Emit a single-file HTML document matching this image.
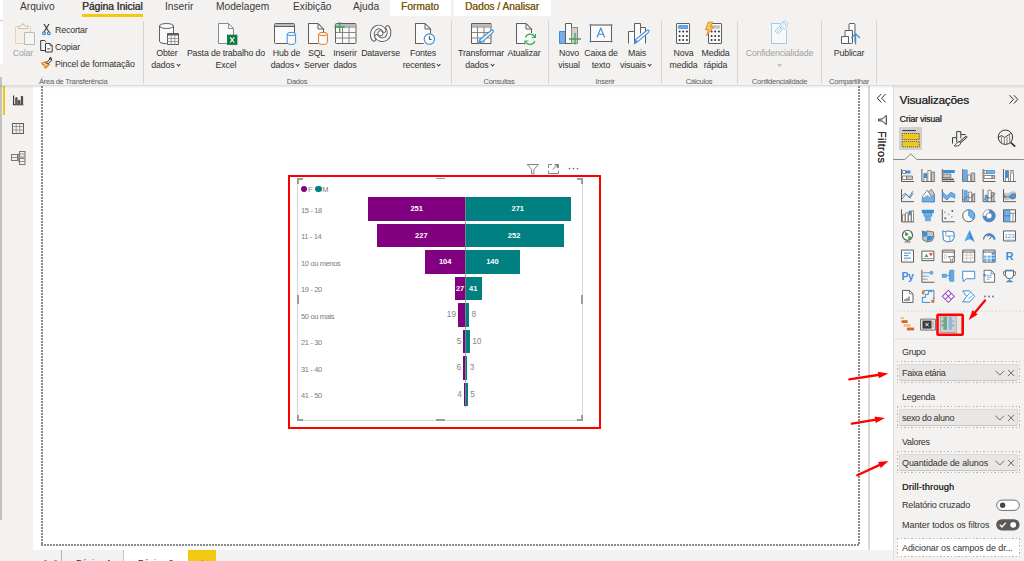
<!DOCTYPE html>
<html><head><meta charset="utf-8">
<style>
*{margin:0;padding:0;box-sizing:border-box}
html,body{width:1024px;height:561px;overflow:hidden;background:#f3f2f1;font-family:"Liberation Sans",sans-serif;color:#252423;position:relative}
.a{position:absolute}
.t{position:absolute;white-space:nowrap;line-height:1}
.tab{font-size:10.2px;top:1.9px;color:#3b3a39}
.rt{font-size:8.8px;letter-spacing:-0.15px;color:#323130;text-align:center;line-height:11.7px}
.st{font-size:8.8px;letter-spacing:-0.15px;color:#323130}
.chev{display:inline-block;font-size:0;width:3.2px;height:3.2px;border-right:1px solid #3b3a39;border-bottom:1px solid #3b3a39;transform:rotate(45deg);margin-left:2px;margin-right:3px;position:relative;top:-1.4px}
.cl{font-size:7.5px;letter-spacing:-0.35px;color:#7c7c7c}
.dl{font-size:7.5px;font-weight:bold;color:#fff;text-align:center}
.ol{font-size:8.3px;color:#858585;margin-top:-0.8px}
.fl{font-size:9px;color:#323130;letter-spacing:-0.3px}
.box{left:896.8px;width:123px;background:repeating-linear-gradient(90deg,#b9b7b5 0 1.5px,transparent 1.5px 3.6px) top left/100% 1px no-repeat,repeating-linear-gradient(90deg,#b9b7b5 0 1.5px,transparent 1.5px 3.6px) bottom left/100% 1px no-repeat,repeating-linear-gradient(180deg,#b9b7b5 0 1.5px,transparent 1.5px 3.6px) top left/1px 100% no-repeat,repeating-linear-gradient(180deg,#b9b7b5 0 1.5px,transparent 1.5px 3.6px) top right/1px 100% no-repeat}
.pill{left:898.6px;width:119.4px;height:16.6px;background:#e9e7e5;border:1px solid #dcdad8;border-bottom-color:#c8c6c4;border-radius:2px}
.gl{font-size:7.6px;letter-spacing:-0.3px;color:#605e5c;top:78.1px}
.sep{position:absolute;width:1px;background:#d6d4d2;top:21px;height:63px}
svg{position:absolute;overflow:visible}
</style></head><body>

<!-- left window strip -->
<div class="a" style="left:0;top:0;width:3px;height:64px;background:#fff"></div>
<div class="a" style="left:0;top:20px;width:3px;height:1px;background:#c8c6c4"></div>
<div class="a" style="left:0;top:77px;width:2px;height:443px;background:#c4c2c0"></div>

<!-- tabs row -->
<div class="a" style="left:390px;top:0;width:61px;height:16px;background:#fff"></div>
<div class="a" style="left:454px;top:0;width:97px;height:16px;background:#fff"></div>
<div class="t tab" style="left:20px">Arquivo</div>
<div class="t tab" style="left:82px;letter-spacing:0px;text-shadow:0.4px 0 0 #3b3a39">Página Inicial</div>
<div class="a" style="left:82px;top:14.2px;width:61px;height:2.5px;background:#f2c811"></div>
<div class="t tab" style="left:165px">Inserir</div>
<div class="t tab" style="left:216px">Modelagem</div>
<div class="t tab" style="left:293px">Exibição</div>
<div class="t tab" style="left:353px">Ajuda</div>
<div class="t tab" style="left:401px;color:#7d5f18;text-shadow:0.2px 0 0 #7d5f18">Formato</div>
<div class="t tab" style="left:465px;color:#7d5f18;text-shadow:0.2px 0 0 #7d5f18">Dados / Analisar</div>


<!-- ribbon text -->
<div class="t rt" style="left:3px;width:40px;top:48px;color:#a19f9d">Colar</div>
<div class="t st" style="left:55px;top:26.2px">Recortar</div>
<div class="t st" style="left:55px;top:42.7px">Copiar</div>
<div class="t st" style="left:55px;top:60.3px">Pincel de formatação</div>
<div class="t gl" style="left:39px">Área de Transferência</div>
<div class="sep" style="left:143px"></div>

<div class="t rt" style="left:127px;width:80px;top:48px">Obter<br>dados<span class="chev"></span></div>
<div class="t rt" style="left:186px;width:80px;top:48px">Pasta de trabalho do<br>Excel</div>
<div class="t rt" style="left:246.5px;width:80px;top:48px">Hub de<br>dados<span class="chev"></span></div>
<div class="t rt" style="left:276.5px;width:80px;top:48px">SQL<br>Server</div>
<div class="t rt" style="left:305px;width:80px;top:48px">Inserir<br>dados</div>
<div class="t rt" style="left:340.5px;width:80px;top:48px">Dataverse</div>
<div class="t rt" style="left:383px;width:80px;top:48px">Fontes<br>recentes<span class="chev"></span></div>
<div class="t gl" style="left:257px;width:80px;text-align:center">Dados</div>
<div class="sep" style="left:451px"></div>

<div class="t rt" style="left:441px;width:80px;top:48px">Transformar<br>dados<span class="chev"></span></div>
<div class="t rt" style="left:484px;width:80px;top:48px">Atualizar</div>
<div class="t gl" style="left:459px;width:80px;text-align:center">Consultas</div>
<div class="sep" style="left:548px"></div>

<div class="t rt" style="left:529px;width:80px;top:48px">Novo<br>visual</div>
<div class="t rt" style="left:561px;width:80px;top:48px">Caixa de<br>texto</div>
<div class="t rt" style="left:597px;width:80px;top:48px">Mais<br>visuais<span class="chev"></span></div>
<div class="t gl" style="left:565px;width:80px;text-align:center">Inserir</div>
<div class="sep" style="left:661px"></div>

<div class="t rt" style="left:643.5px;width:80px;top:48px">Nova<br>medida</div>
<div class="t rt" style="left:675.5px;width:80px;top:48px">Medida<br>rápida</div>
<div class="t gl" style="left:659px;width:80px;text-align:center">Cálculos</div>
<div class="sep" style="left:737px"></div>

<div class="t rt" style="left:739.5px;width:80px;top:48px;color:#a19f9d">Confidencialidade<br><span class="chev" style="margin:0;border-color:#a19f9d"></span></div>
<div class="t gl" style="left:739.5px;width:80px;text-align:center">Confidencialidade</div>
<div class="sep" style="left:821px"></div>

<div class="t rt" style="left:809px;width:80px;top:48px">Publicar</div>
<div class="t gl" style="left:809px;width:80px;text-align:center">Compartilhar</div>
<div class="sep" style="left:876px"></div>


<!-- ribbon icons -->
<svg class="a" style="left:0;top:0" width="1024" height="86" viewBox="0 0 1024 86">
<g fill="none" stroke-linejoin="round">
 <!-- Colar -->
 <rect x="15.5" y="26.5" width="15" height="17" rx="1" fill="#f7efe5" stroke="#f2cfa5"/>
 <path d="M18.5 28.5 v-2.5 h3 l1.5-2.5 l1.5 2.5 h3 v2.5 z" fill="#f8f8f8" stroke="#c4c2c0"/>
 <rect x="24.5" y="32.5" width="10" height="12" fill="#f5f5f5" stroke="#bdbbb9"/>
 <!-- Recortar -->
 <path d="M44 24 L49 32 M49 24 L44 32" stroke="#323130" stroke-width="1.1"/>
 <circle cx="44" cy="33.2" r="1.4" stroke="#3b86c6" stroke-width="1.2"/>
 <circle cx="48.8" cy="33.2" r="1.4" stroke="#3b86c6" stroke-width="1.2"/>
 <!-- Copiar -->
 <path d="M45.5 50.5 h-4.8 v-10 h4 l1.5 1.5" stroke="#3b3a39" stroke-width="1"/>
 <path d="M45.5 43.5 h4.5 l2.2 2.2 v6.3 h-6.7 z" fill="#fafafa" stroke="#3b3a39"/>
 <path d="M50 43.5 v2.2 h2.2" stroke="#3b3a39" stroke-width="0.8"/>
 <rect x="47.3" y="48" width="2.8" height="1.6" fill="#8a8886"/>
 <!-- Pincel -->
 <path d="M40.7 62.8 l5.2-1.8 l4.2 3.6 l-4.5 4.3 z" fill="#e8862a"/>
 <path d="M42.8 63 l4.8 2 M44 65.8 l2.5-0.5" stroke="#fbe3c4" stroke-width="0.9"/>
 <path d="M46.5 62.5 l4-4 l1.6 1.6 l-4 4z" fill="#d0cecc" stroke="#3b3a39" stroke-width="0.9"/>
 <path d="M49.5 59.3 l1.8-1.8" stroke="#3b3a39" stroke-width="2"/>
 <!-- Obter dados -->
 <path d="M159.5 26 v15 c0 1.6 3.2 2.6 7 2.6 M173.5 26 v7" stroke="#605e5c" fill="none"/>
 <path d="M159.5 26 v15 c0 1.6 3.2 2.6 7 2.6 h1 v-10.5 h6 v-7z" fill="#fafafa" stroke="none"/>
 <ellipse cx="166.5" cy="26" rx="7" ry="2.5" fill="#fafafa" stroke="#605e5c"/>
 <path d="M159.5 26 v15 c0 1.6 3.2 2.6 7 2.6 M173.5 26 v7" stroke="#605e5c"/>
 <rect x="167.5" y="33.5" width="11" height="11" fill="#fafafa" stroke="#605e5c"/>
 <rect x="167.5" y="33.5" width="11" height="2" fill="#605e5c"/>
 <path d="M167.5 38.5 h11 M167.5 41.5 h11 M171.2 35.5 v9 M174.8 35.5 v9" stroke="#8a8886" stroke-width="0.8"/>
 <!-- Excel -->
 <path d="M218.5 23.5 h10 l5 5 v15 h-15 z" fill="#fafafa" stroke="#8a8886"/>
 <path d="M228.5 23.5 v5 h5" stroke="#8a8886"/>
 <rect x="227" y="34.7" width="10.4" height="10.2" fill="#107c41"/>
 <path d="M230.2 37.3 l4 5.2 m0-5.2 l-4 5.2" stroke="#fff" stroke-width="1.2"/>
 <!-- Hub de dados -->
 <rect x="274.5" y="23.5" width="20" height="20" rx="1" fill="#fafafa" stroke="#605e5c"/>
 <rect x="275" y="24" width="19" height="2.5" fill="#bebcba"/>
 <path d="M275 26.5 h19" stroke="#605e5c"/>
 <path d="M287.2 34 v8.5 c0 1.2 2 1.9 4.2 1.9 c2.2 0 4.2-0.7 4.2-1.9 v-8.5" fill="#fafafa" stroke="#3b8ed8"/>
 <ellipse cx="291.4" cy="34" rx="4.2" ry="1.6" fill="#fafafa" stroke="#3b8ed8"/>
 <!-- SQL -->
 <path d="M308.5 23.5 h9.5 l5.5 5.5 v3 M318.5 43.5 h-10 v-20" fill="#fafafa" stroke="#605e5c"/>
 <path d="M309 24 h9 l5 5 v14 h-14z" fill="#fafafa" stroke="none"/>
 <path d="M308.5 43.5 v-20 h9.5 l5.5 5.5 v3" stroke="#605e5c"/>
 <path d="M318 23.5 v5.5 h5.5" stroke="#605e5c"/>
 <path d="M318.6 34 v8.5 c0 1.2 2 1.9 4.4 1.9 c2.4 0 4.4-0.7 4.4-1.9 v-8.5" fill="#fafafa" stroke="#e07b2a"/>
 <ellipse cx="323" cy="34" rx="4.4" ry="1.6" fill="#fafafa" stroke="#e07b2a"/>
 <!-- Inserir dados -->
 <rect x="335.5" y="23.5" width="20.5" height="20" rx="1" fill="#fafafa" stroke="#605e5c"/>
 <rect x="336" y="24" width="19.5" height="2.5" fill="#bebcba"/>
 <path d="M336 27 h19.5 M336 32.5 h19.5 M336 38 h19.5 M342.5 27 v16.5 M349 27 v16.5" stroke="#7a7876" stroke-width="0.9"/>
 <path d="M339.7 22 v10.5 M334.2 27 h10.7" stroke="#3aa757" stroke-width="1.3"/>
 <!-- Dataverse -->
 <path d="M384.2 30.5 C382.5 26.8 378.5 26.2 375.8 27.8 C371.8 30.3 371.3 36.5 374 39.3" stroke="#605e5c" stroke-width="4.6" fill="none" stroke-linecap="round"/>
 <path d="M384.2 30.5 C382.5 26.8 378.5 26.2 375.8 27.8 C371.8 30.3 371.3 36.5 374 39.3" stroke="#fafafa" stroke-width="2.7" fill="none" stroke-linecap="round"/>
 <path d="M376.5 36.5 C378.3 39.7 382.8 40.4 385.8 38.8 C389.6 36.6 390 30.5 387.5 27.5" stroke="#605e5c" stroke-width="4.6" fill="none" stroke-linecap="round"/>
 <path d="M376.5 36.5 C378.3 39.7 382.8 40.4 385.8 38.8 C389.6 36.6 390 30.5 387.5 27.5" stroke="#fafafa" stroke-width="2.7" fill="none" stroke-linecap="round"/>
 <circle cx="380.4" cy="33.3" r="2.6" fill="#fafafa" stroke="#605e5c" stroke-width="1"/>
 <!-- Fontes recentes -->
 <path d="M423.5 43.5 h-8 v-20 h9.5 l5.5 5.5 v4.5" fill="#fafafa" stroke="#605e5c"/>
 <path d="M416 24 h9 l5 5 v14 h-14z" fill="#fafafa"/>
 <path d="M423.5 43.5 h-8 v-20 h9.5 l5.5 5.5 v4.5" stroke="#605e5c"/>
 <path d="M425 23.5 v5.5 h5.5" stroke="#605e5c"/>
 <circle cx="429.4" cy="39.1" r="5.2" fill="#fafafa" stroke="#3b8ed8" stroke-width="1.1"/>
 <path d="M429.4 36.2 v3.2 h2.2" stroke="#323130" stroke-width="0.9"/>
 <!-- Transformar -->
 <rect x="471.5" y="23.5" width="19.5" height="20" fill="#fafafa" stroke="#605e5c"/>
 <rect x="472" y="24" width="18.5" height="2.5" fill="#bebcba"/>
 <path d="M472 27 h18.5 M472 32.5 h18.5 M472 38 h18.5 M477.5 27 v16.5 M484 27 v16.5" stroke="#7a7876" stroke-width="0.9"/>
 <path d="M478.5 43.8 l1-3.8 l11.5-9.5 c0.8-0.7 2-0.5 2.2 0.3 c0.3 0.8-0.2 1.6-0.8 2.1 l-11.3 9.7z" fill="#fff" stroke="#3b8ed8" stroke-width="1.1"/>
 <path d="M478.5 43.8 l1-3.8 l2.5 1.2z" fill="#3b8ed8"/>
 <!-- Atualizar -->
 <path d="M524.5 43.5 h-8 v-20 h9.5 l5.5 5.5 v4" fill="#fafafa" stroke="#605e5c"/>
 <path d="M517 24 h9 l5 5 v14 h-14z" fill="#fafafa"/>
 <path d="M524.5 43.5 h-8 v-20 h9.5 l5.5 5.5 v4" stroke="#605e5c"/>
 <path d="M526 23.5 v5.5 h5.5" stroke="#605e5c"/>
 <path d="M525.5 37.5 a5 5 0 0 1 9.3 -0.5 M534.8 41 a5 5 0 0 1 -9.3 0.5" stroke="#3aa757" stroke-width="1.2"/>
 <path d="M535.5 34 v3.5 h-3.5 M524.8 44.5 v-3.5 h3.5" stroke="#3aa757" stroke-width="1.1"/>
 <!-- Novo visual -->
 <rect x="559.5" y="31.5" width="6" height="12" fill="#76aee6" stroke="#3b8ed8"/>
 <rect x="565.5" y="23.5" width="6" height="20" fill="#fafafa" stroke="#605e5c"/>
 <rect x="571.5" y="27.5" width="6" height="16" fill="#d2d0ce" stroke="#8a8886"/>
 <path d="M575 33 v11.5 M569 39 h12" stroke="#3aa757" stroke-width="1.3"/>
 <!-- Caixa de texto -->
 <rect x="590.5" y="25" width="21" height="16.5" fill="#fafafa" stroke="#605e5c"/>
 <path d="M591 25 h20" stroke="#a19f9d" stroke-width="1.2"/>
 <circle cx="590.5" cy="25" r="1.1" fill="#3b8ed8"/><circle cx="611.5" cy="25" r="1.1" fill="#3b8ed8"/>
 <circle cx="590.5" cy="41.5" r="1.1" fill="#3b8ed8"/><circle cx="611.5" cy="41.5" r="1.1" fill="#3b8ed8"/>
 <path d="M597 37.5 l3.8-9.5 l3.8 9.5 M598.3 34.3 h5" stroke="#3b8ed8" stroke-width="1.1"/>
 <!-- Mais visuais -->
 <path d="M628.5 43.5 v-12 h6 v-8 h6 v4 h5 v16" fill="#fafafa" stroke="#605e5c"/>
 <path d="M634.5 31.5 v12 M640.5 27.5 v6" stroke="#605e5c"/>
 <path d="M634.3 43.6 l1-3.8 l11.3-9.3 c0.8-0.7 2-0.5 2.2 0.3 c0.3 0.8-0.2 1.6-0.8 2.1 l-11.1 9.5z" fill="#fff" stroke="#3b8ed8" stroke-width="1.1"/>
 <path d="M634.3 43.6 l1-3.8 l2.5 1.2z" fill="#3b8ed8"/>
 <!-- Nova medida -->
 <rect x="676.5" y="23.5" width="13" height="20" rx="0.5" fill="#fafafa" stroke="#605e5c"/>
 <rect x="678.3" y="25.2" width="9.6" height="3.6" rx="0.4" fill="#2b7cd3"/>
 <rect x="678.8" y="25.8" width="8.6" height="2.2" fill="#6aa8ec"/>
 <g fill="#323130"><circle cx="679.6" cy="31.6" r="1"/><circle cx="683.2" cy="31.6" r="1"/><circle cx="686.9" cy="31.6" r="1"/>
 <circle cx="679.6" cy="35.9" r="1"/><circle cx="683.2" cy="35.9" r="1"/><circle cx="686.9" cy="35.9" r="1"/>
 <circle cx="679.6" cy="40.1" r="1"/><circle cx="683.2" cy="40.1" r="1"/><circle cx="686.9" cy="40.1" r="1"/></g>
 <!-- Medida rapida -->
 <rect x="708.5" y="23.5" width="13" height="20" rx="0.5" fill="#fafafa" stroke="#605e5c"/>
 <rect x="710.3" y="25.2" width="9.6" height="3.6" fill="#c8c6c4"/>
 <g fill="#323130"><circle cx="711.6" cy="31.6" r="1"/><circle cx="715.2" cy="31.6" r="1"/><circle cx="718.9" cy="31.6" r="1"/>
 <circle cx="711.6" cy="35.9" r="1"/><circle cx="715.2" cy="35.9" r="1"/><circle cx="718.9" cy="35.9" r="1"/>
 <circle cx="711.6" cy="40.1" r="1"/><circle cx="715.2" cy="40.1" r="1"/><circle cx="718.9" cy="40.1" r="1"/></g>
 <path d="M708.2 22.2 h4.6 l-2.4 4.6 h3 l-6.8 9 l1.8-6 h-3z" fill="#f7c95c" stroke="#e8862a" stroke-width="0.9"/>
 <!-- Confidencialidade -->
 <path d="M771.5 23.5 h9 M771.5 23.5 v20 h15 v-14" fill="#fafafa" stroke="#9fcbed"/>
 <path d="M772 24 h8 l6 4 v15 h-14z" fill="#f6f8fa"/>
 <path d="M771.5 23.5 h8.5 M771.5 23.5 v20 h15 v-13" stroke="#9fcbed"/>
 <path d="M775 31 l4.5-4.5 l3 3 l-4.5 4.5z M776.5 32.5 l4.5-4.5" stroke="#9fcbed" stroke-width="0.9"/>
 <path d="M780 25 l3-3 l4.5 4.5 l-3 3z M783 22 l2-1.5 l3 3 l-1.5 2" fill="#e8f2fb" stroke="#9fcbed" stroke-width="0.9"/>
 <!-- Publicar -->
 <path d="M841.5 43.5 v-7 h3.5 v-6 h4 v-6 c0-0.6 0.4-1 1-1 h4 c0.6 0 1 0.4 1 1 v18" fill="#fafafa" stroke="#605e5c"/>
 <path d="M845 36.5 h3.5 v7 M849 30.5 h3.5 v13 M841.5 43.5 h10" stroke="#605e5c" fill="none"/>
 <path d="M855.6 44.5 v-10.5 M851.3 38 l4.3-4.3 l4.3 4.3" stroke="#3b8ed8" stroke-width="1.2" fill="none"/>
 <!-- chevrons -->
</g>
</svg>

<!-- ribbon bottom shadow -->


<!-- canvas -->
<div class="a" style="left:33px;top:86px;width:835px;height:464px;background:#fff"></div>
<div class="a" style="left:868px;top:86px;width:2px;height:464px;background:#dad8d6"></div>
<div class="a" style="left:870px;top:86px;width:23px;height:464px;background:#fff"></div>
<div class="a" style="left:893px;top:86px;width:1px;height:475px;background:#e1dfdd"></div>

<!-- left nav -->
<div class="a" style="left:3px;top:86px;width:2px;height:29px;background:#f2c811"></div>

<!-- dotted page boundary -->
<div class="a" style="left:41px;top:86px;width:2px;height:460px;background:repeating-linear-gradient(to bottom,#8c8c8c 0 1.6px,#fff 1.6px 3px)"></div>
<div class="a" style="left:858px;top:86px;width:2px;height:460px;background:repeating-linear-gradient(to bottom,#8c8c8c 0 1.6px,#fff 1.6px 3px)"></div>
<div class="a" style="left:41px;top:544px;width:819px;height:2px;background:repeating-linear-gradient(to right,#8c8c8c 0 1.6px,#fff 1.6px 3px)"></div>


<!-- left nav icons -->
<svg class="a" style="left:0;top:86px" width="33" height="90" viewBox="0 86 33 90">
<g fill="none" stroke="#323130" stroke-width="1">
 <path d="M13.6 95.5 v9.2 h9.8" stroke-width="1.1"/><path d="M15.8 104.3 v-6.5 h1.3 v6.5 M18.6 104.3 v-3.8 h1.3 v3.8 M21.3 104.3 v-7.8 h1.3 v7.8" stroke-width="0.9" fill="#8a8886"/>
 <rect x="12.5" y="123.5" width="11" height="10" stroke="#605e5c"/>
 <path d="M12.5 126.5 h11 M12.5 130 h11 M16.2 123.5 v10 M19.8 123.5 v10" stroke="#8a8886" stroke-width="0.8"/>
 <rect x="11.5" y="154.5" width="6" height="6" stroke="#797775"/>
 <path d="M11.5 157.5 h6" stroke="#797775" stroke-width="0.8"/>
 <rect x="19.5" y="151.5" width="5.5" height="5.5" stroke="#797775"/>
 <path d="M19.5 154 h5.5" stroke="#797775" stroke-width="0.8"/>
 <rect x="19.5" y="158.5" width="5.5" height="6" stroke="#797775"/>
 <path d="M19.5 161.5 h5.5" stroke="#797775" stroke-width="0.8"/>
 <path d="M17.5 157.5 h1 v-3.5 h1 M18.5 157.5 v4 h1" stroke="#797775" stroke-width="0.8"/>
</g>
</svg>

<!-- filters pane -->
<svg class="a" style="left:870px;top:88px" width="23" height="20" viewBox="870 88 23 20"><path d="M881.3 94 l-4 4.2 l4 4.2 M885.6 94 l-4 4.2 l4 4.2" fill="none" stroke="#323130" stroke-width="1"/></svg>
<svg class="a" style="left:870px;top:110px" width="23" height="20" viewBox="870 110 23 20">
<path d="M886.3 115.5 v9 l-4.3-3.6 h-3.5 M886.3 115.5 l-4.3 3.6 h-3.5 v1.8" fill="none" stroke="#323130" stroke-width="1" stroke-linejoin="round"/>
</svg>
<div class="t" style="left:876px;top:130.5px;font-size:11px;color:#323130;writing-mode:vertical-rl;letter-spacing:0.35px;text-shadow:0 0.4px 0 #323130">Filtros</div>

<!-- visualizations pane -->
<div class="t" style="left:899.5px;top:93.8px;font-size:11.6px;color:#323130;letter-spacing:-0.1px;text-shadow:0.25px 0 0 #323130">Visualizações</div>
<svg class="a" style="left:1000px;top:90px" width="24" height="20" viewBox="1000 90 24 20"><path d="M1009.5 95.2 l4 4.2 l-4 4.2 M1013.8 95.2 l4 4.2 l-4 4.2" fill="none" stroke="#323130" stroke-width="1"/></svg>
<div class="t" style="left:899.5px;top:115.3px;font-size:8.9px;color:#3b3a39;letter-spacing:-0.2px;text-shadow:0.3px 0 0 #3b3a39">Criar visual</div>
<div class="a" style="left:899.4px;top:127.3px;width:22.7px;height:22.4px;background:#d2d0ce;border-radius:1px"></div>
<svg class="a" style="left:893px;top:125px" width="131" height="40" viewBox="893 125 131 40">
 <path d="M902.3 130.6 h13.5" stroke="#323130" stroke-width="1"/>
 <rect x="902.2" y="133.5" width="17.2" height="6" fill="#f2c811" stroke="#323130" stroke-width="0.8" stroke-dasharray="1 1"/>
 <rect x="902.2" y="141.4" width="17.2" height="5.5" fill="#f2c811" stroke="#323130" stroke-width="0.8" stroke-dasharray="1 1"/>
 <g fill="none" stroke="#323130" stroke-width="1">
  <path d="M952.5 143.5 V137.7 H956.5 M956.7 142.2 V131.6 H960.8 V138.4 M961 134.6 H965.7" stroke-width="0.95"/>
  <path d="M966.3 136.9 L959.6 142.6" stroke-width="2.3" stroke-linecap="round"/>
  <path d="M966.3 136.9 L959.6 142.6" stroke="#f3f2f1" stroke-width="0.9" stroke-linecap="round"/>
  <path d="M960.2 142 c-1.5-0.6-3 0.2-3.8 1.3 c-0.6 0.9-1 1.9-2.2 2.5 c2 0.6 4.4 0.2 5.6-1 c0.8-0.8 0.9-1.9 0.4-2.8z" fill="#f3f2f1" stroke-width="0.9"/>
  <circle cx="1005.4" cy="137.2" r="7.2"/>
  <path d="M1010.6 142.4 l4.6 4.3" stroke-width="1.7"/>
  <path d="M998.6 137.4 l2.8-1.9 l3 2 l6.3-4" stroke-width="0.9"/>
  <path d="M1001.4 136.5 v7 M1004.3 138.3 v6 M1007 137 v7 M1009.6 135 v6.5" stroke-width="0.8" stroke="#6a6866"/>
 </g>
 <path d="M893 159.5 h11.8 l6-5.6 l6 5.6 h107" fill="none" stroke="#8a8886" stroke-width="1"/>
</svg>

<svg class="a" style="left:893px;top:160px" width="131" height="190" viewBox="893 160 131 190" stroke-linejoin="round" fill="none">
<g transform="translate(901.00 169.00)"><path d="M0.5 0 v12.5 h12.5" stroke="#605e5c"/><rect x="1.5" y="1.5" width="3" height="3" fill="#fff" stroke="#605e5c" stroke-width=".7"/><rect x="4.5" y="1.5" width="5" height="3" fill="#3b8ed8"/><rect x="1.5" y="7" width="4" height="3.5" fill="#fff" stroke="#605e5c" stroke-width=".7"/><rect x="5.5" y="7" width="6" height="3.5" fill="#c8c6c4" stroke="#605e5c" stroke-width=".7"/></g>
<g transform="translate(921.40 169.00)"><path d="M0.5 0 v12.5 h12.5" stroke="#605e5c"/><rect x="2.5" y="4.5" width="3" height="8" fill="#fff" stroke="#605e5c" stroke-width=".7"/><rect x="2.5" y="5" width="3" height="4" fill="#3b8ed8"/><rect x="6.5" y="1.5" width="3" height="11" fill="#fff" stroke="#605e5c" stroke-width=".7"/><rect x="10" y="3" width="3" height="9.5" fill="#c8c6c4" stroke="#605e5c" stroke-width=".7"/></g>
<g transform="translate(941.80 169.00)"><path d="M0.5 0 v12.5 h12.5" stroke="#605e5c"/><rect x="1" y="1" width="12" height="3" fill="#3b8ed8"/><rect x="1" y="5" width="8" height="3.5" fill="#c8c6c4" stroke="#605e5c" stroke-width=".7"/><rect x="1" y="9.5" width="11" height="1.8" fill="#605e5c"/></g>
<g transform="translate(962.20 169.00)"><path d="M0.5 0 v12.5 h12.5" stroke="#605e5c"/><rect x="1.5" y="1" width="3.5" height="11.5" fill="#76aee6" stroke="#3b8ed8" stroke-width=".7"/><rect x="5.5" y="6" width="3" height="6.5" fill="#fff" stroke="#605e5c" stroke-width=".7"/><rect x="9" y="4" width="3.5" height="8.5" fill="#c8c6c4" stroke="#605e5c" stroke-width=".7"/></g>
<g transform="translate(982.60 169.00)"><path d="M0.5 0 v12.5 h12.5" stroke="#605e5c"/><rect x="1.5" y="1.5" width="2.5" height="3" fill="#fff" stroke="#605e5c" stroke-width=".7"/><rect x="4" y="1.5" width="8" height="3" fill="#76aee6" stroke="#3b8ed8" stroke-width=".7"/><rect x="1.5" y="6.5" width="8" height="3" fill="#fff" stroke="#605e5c" stroke-width=".7"/><rect x="9.5" y="6.5" width="2.5" height="3" fill="#c8c6c4" stroke="#605e5c" stroke-width=".7"/></g>
<g transform="translate(1003.00 169.00)"><path d="M0.5 0 v12.5 h12.5" stroke="#605e5c"/><rect x="2.5" y="1.5" width="3" height="11" fill="#fff" stroke="#605e5c" stroke-width=".7"/><rect x="2.5" y="2" width="3" height="7" fill="#3b8ed8"/><rect x="7.5" y="1.5" width="3" height="11" fill="#fff" stroke="#605e5c" stroke-width=".7"/><rect x="7.5" y="2" width="3" height="3" fill="#c8c6c4"/></g>
<g transform="translate(901.00 189.15)"><path d="M0.5 0 v12.5 h12.5" stroke="#605e5c"/><path d="M1 10 l4-5 l3 3 l4-6" stroke="#3b8ed8" fill="none"/><path d="M1 7 l3-3 l5 5 l3-5" stroke="#605e5c" fill="none" stroke-width=".8"/></g>
<g transform="translate(921.40 189.15)"><path d="M0.5 12.5 h12.5" stroke="#605e5c"/><path d="M6 4 l4-4 l3 5 v7.5 h-4z" fill="#c8c6c4" stroke="#605e5c" stroke-width=".7"/><path d="M1 12.5 v-5 l5-6.5 l4 7 l3-2 v6.5z" fill="#fff" stroke="#605e5c" stroke-width=".7"/><path d="M1 12.5 v-3 l5-3 l3 2 l4-3 v7z" fill="#76aee6" stroke="#3b8ed8" stroke-width=".7"/></g>
<g transform="translate(941.80 189.15)"><path d="M0.5 0 v12.5 h12.5" stroke="#605e5c"/><path d="M1 3 l4 4 l4-4 l4 2 v4 l-4-2 l-4 4 l-4-4z" fill="#76aee6" stroke="#3b8ed8" stroke-width=".8"/></g>
<g transform="translate(962.20 189.15)"><path d="M0.5 0 v12.5 h12.5" stroke="#605e5c"/><rect x="2" y="1.5" width="3" height="11" fill="#76aee6" stroke="#3b8ed8" stroke-width=".7"/><rect x="6.5" y="3" width="3" height="9.5" fill="#fff" stroke="#605e5c" stroke-width=".7"/><rect x="10" y="5" width="2.5" height="7.5" fill="#c8c6c4" stroke="#605e5c" stroke-width=".7"/><path d="M1 11 l4-4 l3 2 l5-5" stroke="#605e5c" fill="none" stroke-width=".8"/></g>
<g transform="translate(982.60 189.15)"><path d="M0.5 0 v12.5 h12.5" stroke="#605e5c"/><rect x="2.5" y="6" width="2.5" height="6.5" fill="#76aee6" stroke="#3b8ed8" stroke-width=".7"/><rect x="5.5" y="1" width="3" height="11.5" fill="#fff" stroke="#605e5c" stroke-width=".7"/><rect x="9" y="3.5" width="2.5" height="9" fill="#c8c6c4" stroke="#605e5c" stroke-width=".7"/><path d="M1 11 l3-3 l4 1 l5-5" stroke="#605e5c" fill="none" stroke-width=".8"/></g>
<g transform="translate(1003.00 189.15)"><path d="M0.5 0 v12.5 h12.5" stroke="#605e5c"/><path d="M1 3 q3 2 6 0 t6 0 v7 q-3-2-6 0 t-6 0z" fill="#c8c6c4"/><path d="M1 5 q3 4 6 1 t6-1 v3 q-3 4-6 1 t-6 0z" fill="#3b8ed8"/><circle cx="3.5" cy="8" r="1" fill="#e8842c"/><circle cx="10" cy="7" r="1" fill="#e8842c"/></g>
<g transform="translate(901.00 209.30)"><path d="M0.5 0 v12.5 h12.5" stroke="#605e5c"/><rect x="1.5" y="5.5" width="2.5" height="7" fill="#fff" stroke="#605e5c" stroke-width=".7"/><rect x="4.5" y="3.5" width="2.5" height="9" fill="#fff" stroke="#605e5c" stroke-width=".7"/><rect x="7.5" y="1.5" width="2.5" height="4" fill="#3b8ed8"/><rect x="7.5" y="5.5" width="2.5" height="7" fill="#fff" stroke="#605e5c" stroke-width=".7"/><rect x="10.5" y="1.5" width="2" height="11" fill="#fff" stroke="#605e5c" stroke-width=".7"/></g>
<g transform="translate(921.40 209.30)"><rect x="0.5" y="0.5" width="12" height="3.5" rx=".5" fill="#3b8ed8"/><rect x="2.5" y="4" width="8" height="3" fill="#76aee6" stroke="#3b8ed8" stroke-width=".6"/><rect x="4" y="7.5" width="5" height="4" fill="#76aee6" stroke="#3b8ed8" stroke-width=".6"/></g>
<g transform="translate(941.80 209.30)"><path d="M0.5 0 v12.5 h12.5" stroke="#605e5c"/><circle cx="10.5" cy="1.8" r="1" fill="#605e5c"/><circle cx="3.5" cy="9" r="1" fill="#605e5c"/><circle cx="3" cy="3" r=".9" fill="#76aee6"/><circle cx="7" cy="5" r=".9" fill="#76aee6"/><circle cx="10" cy="7.5" r=".9" fill="#76aee6"/></g>
<g transform="translate(962.20 209.30)"><circle cx="6.5" cy="6.5" r="6" fill="#fff" stroke="#605e5c"/><path d="M6.5 0.5 a6 6 0 0 1 4.8 9.6 l-4.8-3.6z" fill="#76aee6" stroke="#3b8ed8" stroke-width=".8"/></g>
<g transform="translate(982.60 209.30)"><circle cx="6.5" cy="6.5" r="4.6" fill="none" stroke="#3b8ed8" stroke-width="3.2"/><path d="M6.5 1.9 a4.6 4.6 0 0 0 -4.6 4.6" fill="none" stroke="#fff" stroke-width="3.2"/><circle cx="6.5" cy="6.5" r="6.2" fill="none" stroke="#605e5c" stroke-width="0.5"/><circle cx="6.5" cy="6.5" r="2.9" fill="#fff" stroke="#605e5c" stroke-width="0.6"/></g>
<g transform="translate(1003.00 209.30)"><rect x="0.5" y="0.5" width="12" height="12" fill="#fff" stroke="#605e5c"/><rect x="1" y="1" width="6" height="11" fill="#76aee6" stroke="#3b8ed8" stroke-width=".7"/><path d="M1 6.5 h6 M7 4 h5.5 M10 4 v8.5" stroke="#605e5c" stroke-width=".7"/></g>
<g transform="translate(901.00 229.45)"><circle cx="6.5" cy="5.8" r="5" fill="#fff" stroke="#605e5c" stroke-width="1.2"/><path d="M4 2.5 q2.5 0.5 3.5 2 q-0.5 2 -2.5 2 q-1.5 -1 -1 -4z M7.5 6.5 q2.5 0 3 2 q-1.5 2 -3.5 1.5z" fill="#3aa757"/><path d="M6.5 11 v1.3 M3.5 12.5 h6" stroke="#605e5c" stroke-width="0.9"/></g>
<g transform="translate(921.40 229.45)"><path d="M1 1.5 l3 1 l2-1 l6 1 l0.5 5 l-2 4 l-5 1 l-4-2z" fill="#c8c6c4" stroke="#605e5c" stroke-width=".8"/><path d="M1 1.5 l3 1 l2-1 v5 l-4 1z" fill="#3b8ed8"/><path d="M6 6.5 h6 l-2 4 l-5 1z" fill="#3b8ed8"/></g>
<g transform="translate(941.80 229.45)"><path d="M1 1.5 l3 1 l2-1 l6 1 l0.5 5 l-2 4 l-5 1 l-4-2z" fill="#fff" stroke="#3b8ed8" stroke-width=".8"/><path d="M4 2.5 v4 l4 1 v4 M6 6.5 h6" stroke="#3b8ed8" stroke-width=".7" fill="none"/><path d="M1 1.5 l3 1 l2-1 l6 1 l0.5 5 l-2 4 l-5 1 l-4-2z" fill="none" stroke="#605e5c" stroke-width=".4"/></g>
<g transform="translate(962.20 229.45)"><path d="M7.5 0.5 l5 12 l-5-3 l-5 2z" fill="#3b8ed8"/><path d="M7.5 0.5 l0 9 l-5 2z" fill="#5aa6e6"/></g>
<g transform="translate(982.60 229.45)"><path d="M1 10 a5.5 5.5 0 0 1 11 0" fill="none" stroke="#605e5c" stroke-width="1.2"/><path d="M4 6 a5.5 5.5 0 0 1 8 4" fill="none" stroke="#3b8ed8" stroke-width="2.2"/><path d="M6.5 10 l2.5-3" stroke="#605e5c" stroke-width="1"/></g>
<g transform="translate(1003.00 229.45)"><rect x="0.5" y="1.5" width="12" height="10" fill="#fff" stroke="#605e5c"/><text x="6.5" y="8.5" font-size="6" text-anchor="middle" fill="#3b8ed8" font-family="Liberation Sans">123</text><path d="M1.5 10 h10" stroke="#c8c6c4" stroke-width=".7"/></g>
<g transform="translate(901.00 249.60)"><rect x="0.5" y="0.5" width="12" height="12" fill="#fff" stroke="#605e5c"/><path d="M3 3.5 h7 M3 6 h4.5 M3 8.5 h7" stroke="#3b8ed8" stroke-width="1"/><path d="M3 10.5 h4" stroke="#c8c6c4" stroke-width=".7"/></g>
<g transform="translate(921.40 249.60)"><rect x="0.5" y="1.5" width="12" height="9.5" fill="#fff" stroke="#605e5c"/><path d="M3 7.5 l2-3.5 l2 3.5z" fill="#3aa757"/><path d="M7.5 3.5 h4 l-2 3.5z" fill="#e8534b"/><path d="M1.5 9 h10" stroke="#605e5c" stroke-width=".7"/></g>
<g transform="translate(941.80 249.60)"><rect x="0.5" y="0.5" width="12" height="12" fill="#fff" stroke="#605e5c"/><path d="M0.5 2.5 h12" stroke="#605e5c" stroke-width="1"/><rect x="2.5" y="5" width="2" height="4" fill="none" stroke="#c8c6c4" stroke-width=".8"/><path d="M6.5 7 h6.5 l-2.5 3 v3 h-1.5 v-3z" fill="#fff" stroke="#605e5c" stroke-width=".8"/></g>
<g transform="translate(962.20 249.60)"><rect x="0.5" y="0.5" width="12" height="12" fill="#fff" stroke="#605e5c"/><path d="M0.5 2.5 h12" stroke="#605e5c"/><path d="M1 5.5 h11 M1 8.5 h11 M4.5 3 v9 M8.5 3 v9" stroke="#c8c6c4" stroke-width=".9"/></g>
<g transform="translate(982.60 249.60)"><rect x="0.5" y="0.5" width="12" height="12" fill="#fff" stroke="#605e5c"/><path d="M0.5 2.5 h12" stroke="#605e5c"/><rect x="1" y="5.5" width="11" height="6.5" fill="#76aee6"/><rect x="8.5" y="3" width="3.5" height="9" fill="#3b8ed8"/><path d="M1 5.5 h11 M1 8.5 h11 M4.5 3 v9 M8.5 3 v9" stroke="#fff" stroke-width=".9"/></g>
<g transform="translate(1003.00 249.60)"><text x="6.5" y="10.5" font-size="11" font-weight="bold" text-anchor="middle" fill="#3b8ed8" font-family="Liberation Sans">R</text></g>
<g transform="translate(901.00 269.75)"><text x="6.5" y="10" font-size="10.5" font-weight="bold" text-anchor="middle" fill="#3b8ed8" font-family="Liberation Sans" letter-spacing="-0.5">Py</text></g>
<g transform="translate(921.40 269.75)"><path d="M0.5 0 v12.5 h12.5" stroke="#605e5c"/><path d="M1 3 h8" stroke="#3b8ed8" stroke-width=".8"/><circle cx="10" cy="3" r="1.6" fill="#76aee6" stroke="#3b8ed8" stroke-width=".7"/><path d="M1 6.5 h6 M1 9.5 h5" stroke="#605e5c" stroke-width=".6"/><path d="M5 6.5 h3 M4 9.5 h2.5" stroke="#c8c6c4" stroke-width="1.2"/></g>
<g transform="translate(941.80 269.75)"><rect x="0.5" y="4.5" width="4" height="3" fill="#76aee6" stroke="#3b8ed8" stroke-width=".8"/><path d="M4.5 6 h3 M7.5 2 v8" stroke="#3b8ed8" stroke-width=".8"/><rect x="8" y="0.5" width="4" height="3" fill="#76aee6" stroke="#3b8ed8" stroke-width=".8"/><rect x="8" y="4.5" width="4" height="3" fill="#76aee6" stroke="#3b8ed8" stroke-width=".8"/><rect x="8" y="8.5" width="4" height="3" fill="#76aee6" stroke="#3b8ed8" stroke-width=".8"/></g>
<g transform="translate(962.20 269.75)"><path d="M0.5 1.5 h12 v7.5 h-8.5 l-3 3 v-3 h-0.5z" fill="#fff" stroke="#3b8ed8" stroke-width="1"/></g>
<g transform="translate(982.60 269.75)"><path d="M1.5 0.5 h7 l3.5 3.5 v8.5 h-10.5z" fill="#fff" stroke="#605e5c" stroke-width=".9"/><path d="M8.5 0.5 v3.5 h3.5" stroke="#605e5c" stroke-width=".7" fill="none"/><circle cx="2" cy="5.5" r="1.2" fill="#3b8ed8"/><path d="M4 5.5 h5 M4 7.5 h5 M4 9.5 h3" stroke="#76aee6" stroke-width="1"/></g>
<g transform="translate(1003.00 269.75)"><path d="M2.5 0.5 h8 v4.5 a4 4 0 0 1 -8 0z" fill="#fff" stroke="#605e5c" stroke-width="1"/><path d="M2.5 2 h-2 v2 a2 2 0 0 0 2 2 M10.5 2 h2 v2 a2 2 0 0 1 -2 2" fill="none" stroke="#605e5c" stroke-width=".8"/><path d="M2.5 0.5 h8 v1.2 h-8z" fill="#3b8ed8"/><path d="M6.5 9 v1.5 M3.5 12 l3-1.5 l3 1.5z" stroke="#3b8ed8" fill="#3b8ed8"/></g>
<g transform="translate(901.00 289.90)"><path d="M1.5 0.5 h7 l3.5 3.5 v8.5 h-10.5z" fill="#fff" stroke="#605e5c" stroke-width="1"/><path d="M8.5 0.5 v3.5 h3.5" stroke="#605e5c" stroke-width=".7" fill="none"/><path d="M4 11 v-2 M6 11 v-3 M8 11 v-4.5" stroke="#605e5c" stroke-width="1.2"/></g>
<g transform="translate(921.40 289.90)"><path d="M2.5 3 v-2.5 h10 v10 h-2.5" fill="none" stroke="#3b8ed8" stroke-width="1"/><path d="M1 12.5 v-5 h3 v-3 h3 v-3 h4" fill="none" stroke="#3b8ed8" stroke-width="1"/><rect x="0.5" y="0.5" width="2.5" height="4" rx="1" fill="#e07b2a"/><circle cx="11.5" cy="11.5" r="1.6" fill="#e07b2a"/><circle cx="12.5" cy="8" r=".8" fill="#e07b2a"/><path d="M1 12.5 h8" stroke="#3b8ed8"/></g>
<g transform="translate(941.80 289.90)"><path d="M6.5 0.5 l6 6 l-6 6 l-6-6z" fill="#fff" stroke="#9b4fc0" stroke-width="1.1"/><path d="M3.5 3.5 l6 6 M9.5 3.5 l-6 6" stroke="#9b4fc0" stroke-width="1.1"/></g>
<g transform="translate(962.20 289.90)"><path d="M0.5 1 h7 l5 5.5 l-5 5.5 h-7 l4-5.5z" fill="#fff" stroke="#3b8ed8" stroke-width="1"/><path d="M4.5 6.5 l4-4 M6 9.5 l4-4" stroke="#3b8ed8" stroke-width=".9"/></g>
<g transform="translate(982.60 289.90)"><circle cx="2.4" cy="6.6" r=".9" fill="#5f6f85"/><circle cx="6.4" cy="6.6" r=".9" fill="#5f6f85"/><circle cx="10.4" cy="6.6" r=".9" fill="#5f6f85"/></g>
<path d="M897 311 h127" stroke="#d6d4d2" stroke-width="1" stroke-dasharray="1.5 2"/>
<g transform="translate(900.4 317)"><rect x="0.3" y="0" width="3.5" height="2.2" fill="#f0c27a"/><rect x="1.2" y="3.2" width="6" height="2.8" fill="#d9603b"/><rect x="3.2" y="7" width="7" height="2.8" fill="#f0c27a"/><rect x="6.5" y="10.6" width="7.3" height="2.8" fill="#d9603b"/></g>
<g transform="translate(920 318.6)"><rect x="0.5" y="0.5" width="15" height="11" fill="#e1dfdd" stroke="#7a7876"/><rect x="2.5" y="2" width="9" height="8" fill="#3b3a39"/><path d="M5.3 4.3 l3.4 3.4 M8.7 4.3 l-3.4 3.4" stroke="#fff" stroke-width="1"/><path d="M13 3 v6" stroke="#a19f9d"/></g>
<rect x="940.2" y="315.7" width="16.5" height="17" fill="#d0cfce" stroke="#8a8886" stroke-width="0.8"/>
<rect x="956.7" y="316" width="4.5" height="16.5" fill="#e8e6e4"/>
<path d="M947 316.8 v13 h-3.6 v-3.2 h-2 v-2 h2 v-2.6 h-2 v-1.6 h2 v-3.6z" fill="#6aa98c"/>
<path d="M948.7 316.8 v13 h3.3 v-3.2 h2.1 v-2 h-2.1 v-2.6 h2.1 v-1.6 h-2.1 v-3.6z" fill="#8db5e2"/>
<rect x="937.5" y="314.7" width="25.2" height="20" rx="0.8" fill="none" stroke="#fe0000" stroke-width="2.6"/>

<path d="M893 339 h131" stroke="#e1dfdd" stroke-width="1"/>
</svg>

<!-- fields -->
<div class="t fl" style="left:902px;top:348px">Grupo</div>
<div class="a box" style="top:361px;height:22px"></div>
<div class="a pill" style="top:364px"></div>
<div class="t fl" style="left:902px;top:368.5px">Faixa etária</div>
<div class="t fl" style="left:902px;top:393px">Legenda</div>
<div class="a box" style="top:406px;height:22px"></div>
<div class="a pill" style="top:409px"></div>
<div class="t fl" style="left:902px;top:413.5px">sexo do aluno</div>
<div class="t fl" style="left:902px;top:438px">Valores</div>
<div class="a box" style="top:451px;height:21.5px"></div>
<div class="a pill" style="top:454px"></div>
<div class="t fl" style="left:902px;top:458.5px;letter-spacing:-0.1px">Quantidade de alunos</div>
<div class="t fl" style="left:902px;top:482.5px;letter-spacing:0.25px;text-shadow:0.35px 0 0 #323130">Drill-through</div>
<div class="t fl" style="left:902px;top:501.3px;letter-spacing:-0.15px">Relatório cruzado</div>
<div class="t fl" style="left:902px;top:520.8px;letter-spacing:-0.05px">Manter todos os filtros</div>
<div class="a" style="left:897px;top:538.5px;width:122.5px;height:17.5px;background:#fff"></div><div class="a box" style="top:538px;height:18.5px"></div>
<div class="t fl" style="left:902px;top:543.8px;letter-spacing:-0.1px">Adicionar os campos de dr...</div>
<svg class="a" style="left:893px;top:340px" width="131" height="221" viewBox="893 340 131 221" fill="none">
 <path d="M995.5 370.8 l4.3 4.3 l4.3-4.3 M1008 369.9 l6.2 6.2 M1014.2 369.9 l-6.2 6.2" stroke="#605e5c" stroke-width="0.9"/>
 <path d="M995.5 415.7 l4.3 4.3 l4.3-4.3 M1008 414.8 l6.2 6.2 M1014.2 414.8 l-6.2 6.2" stroke="#605e5c" stroke-width="0.9"/>
 <path d="M995.5 460.7 l4.3 4.3 l4.3-4.3 M1008 459.9 l6.2 6.2 M1014.2 459.9 l-6.2 6.2" stroke="#605e5c" stroke-width="0.9"/>
 <rect x="996.7" y="500.1" width="22.6" height="10.3" rx="5.15" fill="#fff" stroke="#605e5c" stroke-width="0.9"/>
 <circle cx="1002.6" cy="505.25" r="2.7" fill="#484644"/>
 <rect x="996.2" y="519.2" width="23.4" height="11.2" rx="5.6" fill="#5c5a58"/>
 <path d="M999.8 524.8 l2.2 2.2 l3.8-4.4" stroke="#fff" stroke-width="1.4"/>
 <circle cx="1013.2" cy="524.8" r="2.9" fill="#fff"/>
</svg>

<!-- page tabs -->
<div class="a" style="left:33px;top:550px;width:860px;height:11px;background:#f3f2f1"></div>
<div class="a" style="left:61px;top:550px;width:1px;height:11px;background:#b3b0ad"></div>
<div class="a" style="left:123px;top:550px;width:1px;height:11px;background:#c8c6c4"></div>
<div class="a" style="left:124px;top:550px;width:64px;height:11px;background:#fff"></div>
<div class="a" style="left:188px;top:550px;width:28px;height:11px;background:#f2c811"></div>
<div class="t" style="left:76px;top:559px;font-size:9px;color:#323130">Página 1</div>
<div class="t" style="left:138px;top:559px;font-size:9px;color:#323130">Página 2</div>
<div class="t" style="left:199px;top:557.5px;font-size:11px;color:#323130">+</div>
<div class="a" style="left:44px;top:559.5px;width:3px;height:1px;background:#a19f9d"></div>
<div class="a" style="left:54px;top:559.5px;width:3px;height:1px;background:#a19f9d"></div>

<div class="a" style="left:0;top:84.5px;width:1024px;height:4.5px;background:linear-gradient(rgba(0,0,0,0.1),rgba(0,0,0,0.07) 35%,rgba(0,0,0,0.02) 75%,rgba(0,0,0,0))"></div>
<!-- chart -->
<div class="a" style="left:288px;top:175px;width:313px;height:254px;border:2px solid #fe0000"></div>
<div class="a" style="left:297px;top:178px;width:286px;height:243px;border:1px solid #d6d6d6;border-top:none"></div>
<div class="a" style="left:368.04px;top:197.10px;width:97.26px;height:23.7px;background:#800080"></div>
<div class="a" style="left:465.30px;top:197.10px;width:105.61px;height:23.7px;background:#008080"></div>
<div class="t cl" style="left:301px;top:206.85px">15 - 18</div>
<div class="t dl" style="left:396.67px;width:40px;top:205.15px">251</div>
<div class="t dl" style="left:497.81px;width:40px;top:205.15px">271</div>
<div class="a" style="left:377.34px;top:223.60px;width:87.96px;height:23.7px;background:#800080"></div>
<div class="a" style="left:465.30px;top:223.60px;width:98.25px;height:23.7px;background:#008080"></div>
<div class="t cl" style="left:301px;top:233.35px">11 - 14</div>
<div class="t dl" style="left:401.32px;width:40px;top:231.65px">227</div>
<div class="t dl" style="left:494.12px;width:40px;top:231.65px">252</div>
<div class="a" style="left:425.00px;top:250.10px;width:40.30px;height:23.7px;background:#800080"></div>
<div class="a" style="left:465.30px;top:250.10px;width:54.85px;height:23.7px;background:#008080"></div>
<div class="t cl" style="left:301px;top:259.85px">10 ou menos</div>
<div class="t dl" style="left:425.15px;width:40px;top:258.15px">104</div>
<div class="t dl" style="left:472.43px;width:40px;top:258.15px">140</div>
<div class="a" style="left:454.84px;top:276.60px;width:10.46px;height:23.7px;background:#800080"></div>
<div class="a" style="left:465.30px;top:276.60px;width:16.49px;height:23.7px;background:#008080"></div>
<div class="t cl" style="left:301px;top:286.35px">19 - 20</div>
<div class="t dl" style="left:440.07px;width:40px;top:284.65px">27</div>
<div class="t dl" style="left:453.24px;width:40px;top:284.65px">41</div>
<div class="a" style="left:457.94px;top:303.10px;width:7.36px;height:23.7px;background:#800080"></div>
<div class="a" style="left:465.30px;top:303.10px;width:3.70px;height:23.7px;background:#008080"></div>
<div class="t cl" style="left:301px;top:312.85px">50 ou mais</div>
<div class="t ol" style="right:567.96px;top:311.05px">19</div>
<div class="t ol" style="left:471.40px;top:311.05px">8</div>
<div class="a" style="left:463.36px;top:329.60px;width:1.94px;height:23.7px;background:#800080"></div>
<div class="a" style="left:465.30px;top:329.60px;width:4.47px;height:23.7px;background:#008080"></div>
<div class="t cl" style="left:301px;top:339.35px">21 - 30</div>
<div class="t ol" style="right:562.54px;top:337.55px">5</div>
<div class="t ol" style="left:472.18px;top:337.55px">10</div>
<div class="a" style="left:462.98px;top:356.10px;width:2.33px;height:23.7px;background:#800080"></div>
<div class="a" style="left:465.30px;top:356.10px;width:2.00px;height:23.7px;background:#008080"></div>
<div class="t cl" style="left:301px;top:365.85px">31 - 40</div>
<div class="t ol" style="right:562.92px;top:364.05px">6</div>
<div class="t ol" style="left:469.70px;top:364.05px">3</div>
<div class="a" style="left:463.75px;top:382.60px;width:1.55px;height:23.7px;background:#800080"></div>
<div class="a" style="left:465.30px;top:382.60px;width:2.54px;height:23.7px;background:#008080"></div>
<div class="t cl" style="left:301px;top:392.35px">41 - 50</div>
<div class="t ol" style="right:562.15px;top:390.55px">4</div>
<div class="t ol" style="left:470.24px;top:390.55px">5</div>
<div class="a" style="left:465px;top:197px;width:1px;height:209.5px;background:#8a8a8a;opacity:.8"></div>
<div class="a" style="left:301px;top:186px;width:6.4px;height:6.4px;border-radius:50%;background:#800080"></div>
<div class="t cl" style="left:308px;top:185.5px">F</div>
<div class="a" style="left:315.2px;top:186px;width:6.4px;height:6.4px;border-radius:50%;background:#008080"></div>
<div class="t cl" style="left:322.2px;top:185.5px">M</div>
<div class="a" style="left:297px;top:178px;width:6px;height:2px;background:#9c9c9c"></div>
<div class="a" style="left:297px;top:178px;width:2px;height:6px;background:#9c9c9c"></div>
<div class="a" style="left:577px;top:178px;width:6px;height:2px;background:#9c9c9c"></div>
<div class="a" style="left:581px;top:178px;width:2px;height:6px;background:#9c9c9c"></div>
<div class="a" style="left:297px;top:419px;width:6px;height:2px;background:#9c9c9c"></div>
<div class="a" style="left:297px;top:415px;width:2px;height:6px;background:#9c9c9c"></div>
<div class="a" style="left:577px;top:419px;width:6px;height:2px;background:#9c9c9c"></div>
<div class="a" style="left:581px;top:415px;width:2px;height:6px;background:#9c9c9c"></div>
<div class="a" style="left:436px;top:177.7px;width:9px;height:1.6px;background:#9c9c9c"></div>
<div class="a" style="left:436px;top:419.4px;width:9px;height:1.8px;background:#9c9c9c"></div>
<div class="a" style="left:297px;top:295px;width:2px;height:9px;background:#9c9c9c"></div>
<div class="a" style="left:581px;top:295px;width:2px;height:9px;background:#9c9c9c"></div>
<svg class="a" style="left:520px;top:160px" width="70" height="18" viewBox="520 160 70 18">
<path d="M527.2 164.5 h11.2 l-4.4 4.8 v4.5 h-2.4 v-4.5z" fill="none" stroke="#777" stroke-width="0.9" stroke-linejoin="round"/>
<path d="M548.5 168 v-3.5 h3.5 M555 164.5 h3.5 v3.5 M558.5 170.5 v3 h-10 v-3 M552.5 169.5 l5-4.5 M554.5 165 h3 v3" fill="none" stroke="#777" stroke-width="0.9"/>
<circle cx="569.5" cy="168.5" r="0.85" fill="#666"/><circle cx="573.5" cy="168.5" r="0.85" fill="#666"/><circle cx="577.5" cy="168.5" r="0.85" fill="#666"/>
</svg>
<svg class="a" style="left:0;top:0" width="1024" height="561" viewBox="0 0 1024 561"><path d="M849.30 379.30 L879.40 374.75" stroke="#fe0000" stroke-width="2.3" stroke-linecap="round"/><path d="M888.30 373.40 L878.91 378.16 L877.92 371.63z" fill="#fe0000"/><path d="M851.80 423.70 L876.13 419.60" stroke="#fe0000" stroke-width="2.3" stroke-linecap="round"/><path d="M885.00 418.10 L875.69 423.02 L874.59 416.51z" fill="#fe0000"/><path d="M857.30 475.20 L880.32 464.65" stroke="#fe0000" stroke-width="2.3" stroke-linecap="round"/><path d="M888.50 460.90 L880.78 468.07 L878.03 462.07z" fill="#fe0000"/><path d="M985.00 300.50 L974.47 313.09" stroke="#fe0000" stroke-width="2.3" stroke-linecap="round"/><path d="M968.70 320.00 L972.58 310.21 L977.65 314.44z" fill="#fe0000"/></svg>
</body></html>
